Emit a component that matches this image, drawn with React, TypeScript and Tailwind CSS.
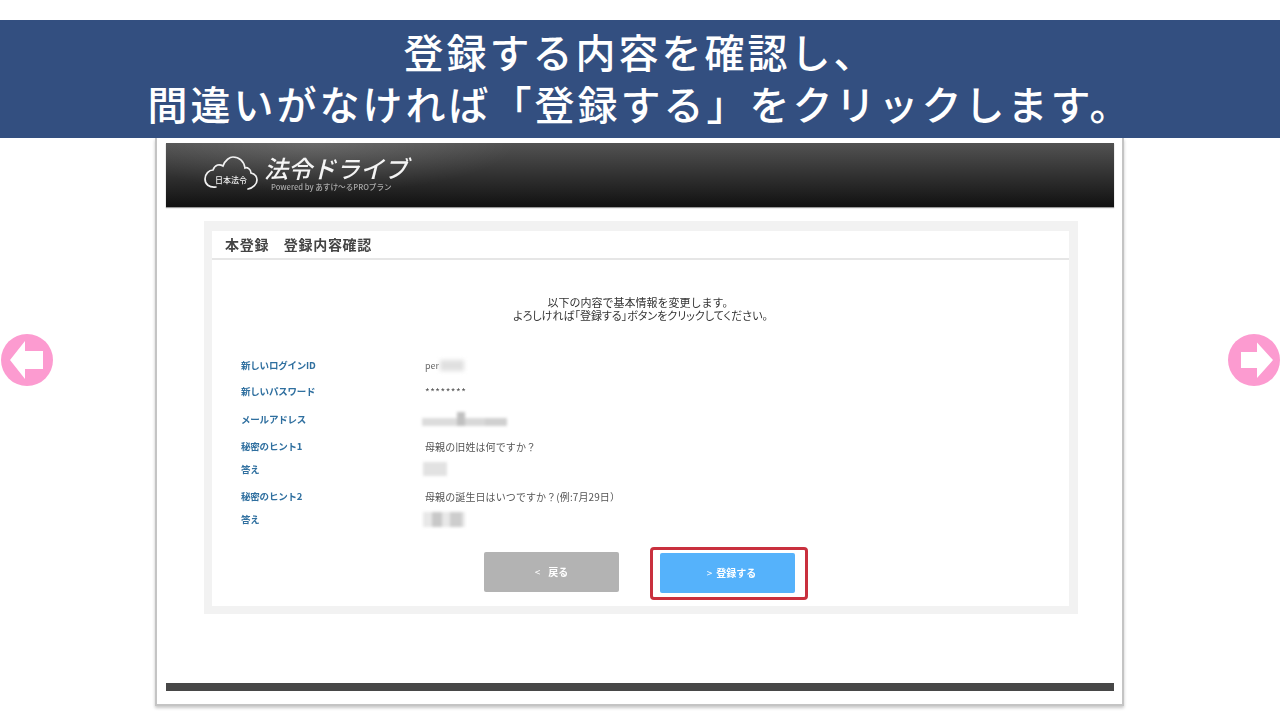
import React from "react";

const jp = "font-['Noto_Sans_CJK_JP','Noto_Sans',sans-serif]";

const rows: { label: string; value?: string; mt: string; redact?: React.ReactNode; valueClass?: string }[] = [
  { label: "新しいログインID", mt: "mt-0", redact: <Login /> },
  { label: "新しいパスワード", mt: "mt-[6px]", value: "********", valueClass: "tracking-[0.5px]" },
  { label: "メールアドレス", mt: "mt-[8px]", redact: <Mail /> },
  { label: "秘密のヒント1", mt: "mt-[7px]", value: "母親の旧姓は何ですか？" },
  { label: "答え", mt: "mt-[3px]", redact: <Answer1 /> },
  { label: "秘密のヒント2", mt: "mt-[7px]", value: "母親の誕生日はいつですか？(例:7月29日）" },
  { label: "答え", mt: "mt-[3px]", redact: <Answer2 /> },
];

function Login() {
  return (
    <div className="flex items-center gap-[1px]">
      <span className="text-[9px] leading-none text-[#666]">per</span>
      <div className="h-[11px] w-[24px] bg-[#e0e0e0] blur-[2px]" />
    </div>
  );
}

function Mail() {
  return (
    <div className="-ml-[3px] flex items-end blur-[1.5px]">
      <div className="h-[8px] w-[35px] bg-[#dcdcdc]" />
      <div className="h-[14px] w-[8px] bg-[#c0c0c0]" />
      <div className="h-[8px] w-[20px] bg-[#d8d8d8]" />
      <div className="h-[8px] w-[22px] bg-[#d0d0d0]" />
    </div>
  );
}

function Answer1() {
  return <div className="-ml-[2px] h-[14px] w-[24px] bg-[#e2e2e2] blur-[1.5px]" />;
}

function Answer2() {
  return (
    <div className="-ml-[2px] flex h-[15px] w-[42px] items-center bg-[#e8e8e8] blur-[1.5px]">
      <div className="ml-[9px] h-[15px] w-[10px] bg-[#c8c8c8]" />
      <div className="ml-[8px] h-[15px] w-[12px] bg-[#cdcdcd]" />
    </div>
  );
}

function Arrow({ right }: { right?: boolean }) {
  return (
    <svg width="52" height="52" viewBox="0 0 52 52" className="block">
      <circle cx="26" cy="26" r="26" fill="#fc9bd0" />
      <path
        d={right ? "M13 18H29V8.5L45 26 29 44V34H13Z" : "M42 17H24V7L9 26 24 45V35H42Z"}
        fill="#fff"
      />
    </svg>
  );
}

function Logo() {
  return (
    <div className="flex items-center pl-[38px] blur-[0.4px]">
      <svg width="54" height="34" viewBox="0 0 54 34" className="mb-[4px] block">
        <path
          d="M12 31C5 32 1 28 1 23C1 18 5 14 9 14C11 8 16 8 19 10C21 4 26 1 29 1C35 1 40 5 41 12C43 11 47 13 47 17C51 18 53 21 53 24C53 28 49 32 44 33"
          fill="none"
          stroke="#f1f1f1"
          strokeWidth="1.7"
          strokeLinecap="round"
        />
        <text x="27" y="27" textAnchor="middle" fontSize="8" fontWeight="500" fill="#f1f1f1" fontFamily="'Noto Sans CJK JP'">
          日本法令
        </text>
      </svg>
      <div className="mb-[5px] ml-[6px] flex flex-col">
        <span className="text-[24px] leading-[28px] font-medium text-[#f4f4f4] italic">法令ドライブ</span>
        <span className="ml-[7px] text-[7.6px] leading-[9px] font-medium text-[#aaa]">Powered by あすけ～るPROプラン</span>
      </div>
    </div>
  );
}

export default function App() {
  return (
    <div className={`h-[720px] w-[1280px] overflow-hidden bg-white pt-[20px] ${jp}`}>
      <div className="relative z-10 flex h-[118px] flex-col items-center bg-[#334f80] pt-[5px] text-[40px] leading-[52px] font-medium tracking-[3px] text-white">
        <p>登録する内容を確認し、</p>
        <p>間違いがなければ「登録する」をクリックします。</p>
      </div>

      <div className="grid grid-cols-[155px_969px_1fr]">
        <div className="mt-[196px] pl-[1px]">
          <Arrow />
        </div>

        <div className="h-[568px] border-x-2 border-b-2 border-[#c4c4c4] bg-white px-[9px] pt-[5px] shadow-[0_2px_3px_rgba(0,0,0,0.22)]">
          <div className="flex h-[64px] w-[948px] items-center bg-[radial-gradient(ellipse_200px_50px_at_150px_0,rgba(255,255,255,0.14),transparent),linear-gradient(#525252,#111111)] shadow-[0_1px_1px_rgba(0,0,0,0.4)]">
            <Logo />
          </div>

          <div className="mt-[14px] ml-[38px] h-[393px] w-[874px] bg-[#f2f2f2] pt-[10px] pr-[9px] pb-[8px] pl-[8px] blur-[0.5px]">
            <div className="flex h-full flex-col bg-white">
              <div className="flex h-[29px] items-center border-b-2 border-[#e6e6e6] bg-white pl-[13px] text-[14px] font-bold tracking-[0.7px] text-[#444]">
                本登録　登録内容確認
              </div>

              <div className="mt-[36px] text-center text-[11px] leading-[13px] text-[#333]">
                <p>以下の内容で基本情報を変更します。</p>
                <p className="[font-feature-settings:'palt']">よろしければ「登録する」ボタンをクリックしてください。</p>
              </div>

              <div className="mt-[33px] flex flex-col pl-[29px]">
                {rows.map((row, i) => (
                  <div key={i} className={`flex h-[20px] items-center ${row.mt}`}>
                    <span className="w-[184px] text-[9.5px] font-bold tracking-[-0.2px] text-[#2f6f9f]">{row.label}</span>
                    {row.value ? (
                      <span className={`text-[10px] text-[#555] ${row.valueClass ?? "tracking-[0.1px]"}`}>{row.value}</span>
                    ) : (
                      row.redact
                    )}
                  </div>
                ))}
              </div>

              <div className="mt-[18px] flex items-start pl-[272px]">
                <div className="mt-[5px] flex h-[40px] w-[135px] items-center justify-center gap-[8px] rounded-[2px] bg-[#b3b3b3] pb-[2px] text-[10px] font-bold text-white">
                  <span className="font-normal">&lt;</span>
                  <span>戻る</span>
                </div>
                <div className="ml-[31px] rounded-[4px] border-[3px] border-[#c9303e] pt-[3px] pr-[10px] pb-[4px] pl-[7px]">
                  <div className="flex h-[40px] w-[135px] items-center justify-center gap-[4px] rounded-[2px] bg-[#55b2fb] pb-[2px] pl-[8px] text-[10px] font-bold text-white">
                    <span className="font-normal">&gt;</span>
                    <span>登録する</span>
                  </div>
                </div>
              </div>
            </div>
          </div>

          <div className="mt-[69px] h-[8px] w-[948px] bg-[#474747]" />
        </div>

        <div className="mt-[196px] flex justify-end">
          <Arrow right />
        </div>
      </div>
    </div>
  );
}
